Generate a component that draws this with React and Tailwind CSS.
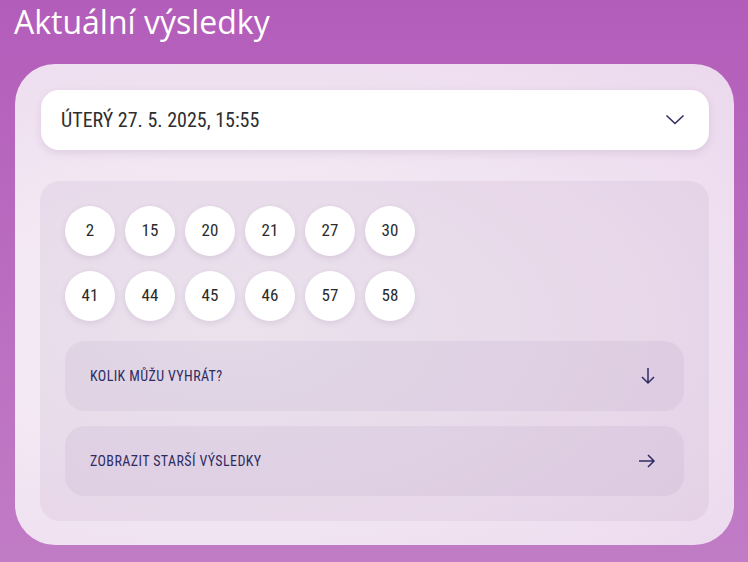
import React from "react"

const rows = [
  [2, 15, 20, 21, 27, 30],
  [41, 44, 45, 46, 57, 58],
]

const condensed = { fontFamily: '"Roboto", "Liberation Sans", sans-serif' }

function ChevronDown() {
  return (
    <svg width="20" height="12" viewBox="0 0 20 12" fill="none">
      <path d="M1.5 1.5 L10 9.5 L18.5 1.5" stroke="#2f2c63" strokeWidth="1.6" />
    </svg>
  )
}

function ArrowDown() {
  return (
    <svg width="16" height="18" viewBox="0 0 16 18" fill="none">
      <path d="M8 1 V16 M2 10 L8 16 L14 10" stroke="#2f2c63" strokeWidth="1.5" />
    </svg>
  )
}

function ArrowRight() {
  return (
    <svg width="18" height="16" viewBox="0 0 18 16" fill="none">
      <path d="M1 8 H16 M10 2 L16 8 L10 14" stroke="#2f2c63" strokeWidth="1.5" />
    </svg>
  )
}

function Ball({ n }) {
  return (
    <div className="w-[50px] h-[50px] rounded-full bg-white shadow-[0_2px_6px_rgba(90,50,110,0.12)] flex items-center justify-center text-[17px] font-normal text-[#2b2b2b] [font-stretch:80%]">
      {n}
    </div>
  )
}

function LinkRow({ label, icon }) {
  return (
    <div className="h-[70px] rounded-[20px] bg-[rgba(120,90,140,0.07)] flex items-center justify-between pl-[25px] pr-[28px]">
      <span className="text-[14px] font-normal tracking-[0.4px] uppercase text-[#2f2c63] [font-stretch:80%]">{label}</span>
      {icon}
    </div>
  )
}

export default function App() {
  return (
    <div
      className="w-[748px] h-[562px] overflow-hidden bg-gradient-to-b from-[#b35dba] to-[#c17cc6] px-[15px] pt-0"
      style={condensed}
    >
      <h1
        className="text-white text-[32px] leading-[44px] h-[64px] pt-0 -ml-px"
        style={{ fontFamily: '"Open Sans", "Noto Sans", sans-serif' }}
      >
        Aktuální výsledky
      </h1>
      <div className="w-[719px] h-[481px] rounded-[40px] bg-[#f0e0f1] bg-[radial-gradient(ellipse_at_30%_55%,#f4eef6_0%,#f2e6f3_45%,#ebd8ed_100%)] pl-[26px] pr-[25px] pt-[26px] pb-[24px] flex flex-col gap-[31px]">
        <div className="h-[60px] shrink-0 rounded-[18px] bg-white shadow-[0_3px_8px_rgba(90,50,110,0.12)] flex items-center justify-between pl-[20px] pr-[24px]">
          <span className="text-[20px] font-normal text-[#2e2e2e] [font-stretch:80%]">ÚTERÝ 27. 5. 2025, 15:55</span>
          <ChevronDown />
        </div>
        <div className="flex-1 -ml-px rounded-[20px] bg-[rgba(110,70,130,0.07)] p-[25px] flex flex-col">
          <div className="flex flex-col gap-[15px]">
            {rows.map((row, i) => (
              <div key={i} className="flex gap-[10px]">
                {row.map((n) => (
                  <Ball key={n} n={n} />
                ))}
              </div>
            ))}
          </div>
          <div className="mt-[20px] flex flex-col gap-[15px]">
            <LinkRow label="Kolik můžu vyhrát?" icon={<ArrowDown />} />
            <LinkRow label="Zobrazit starší výsledky" icon={<ArrowRight />} />
          </div>
        </div>
      </div>
    </div>
  )
}
